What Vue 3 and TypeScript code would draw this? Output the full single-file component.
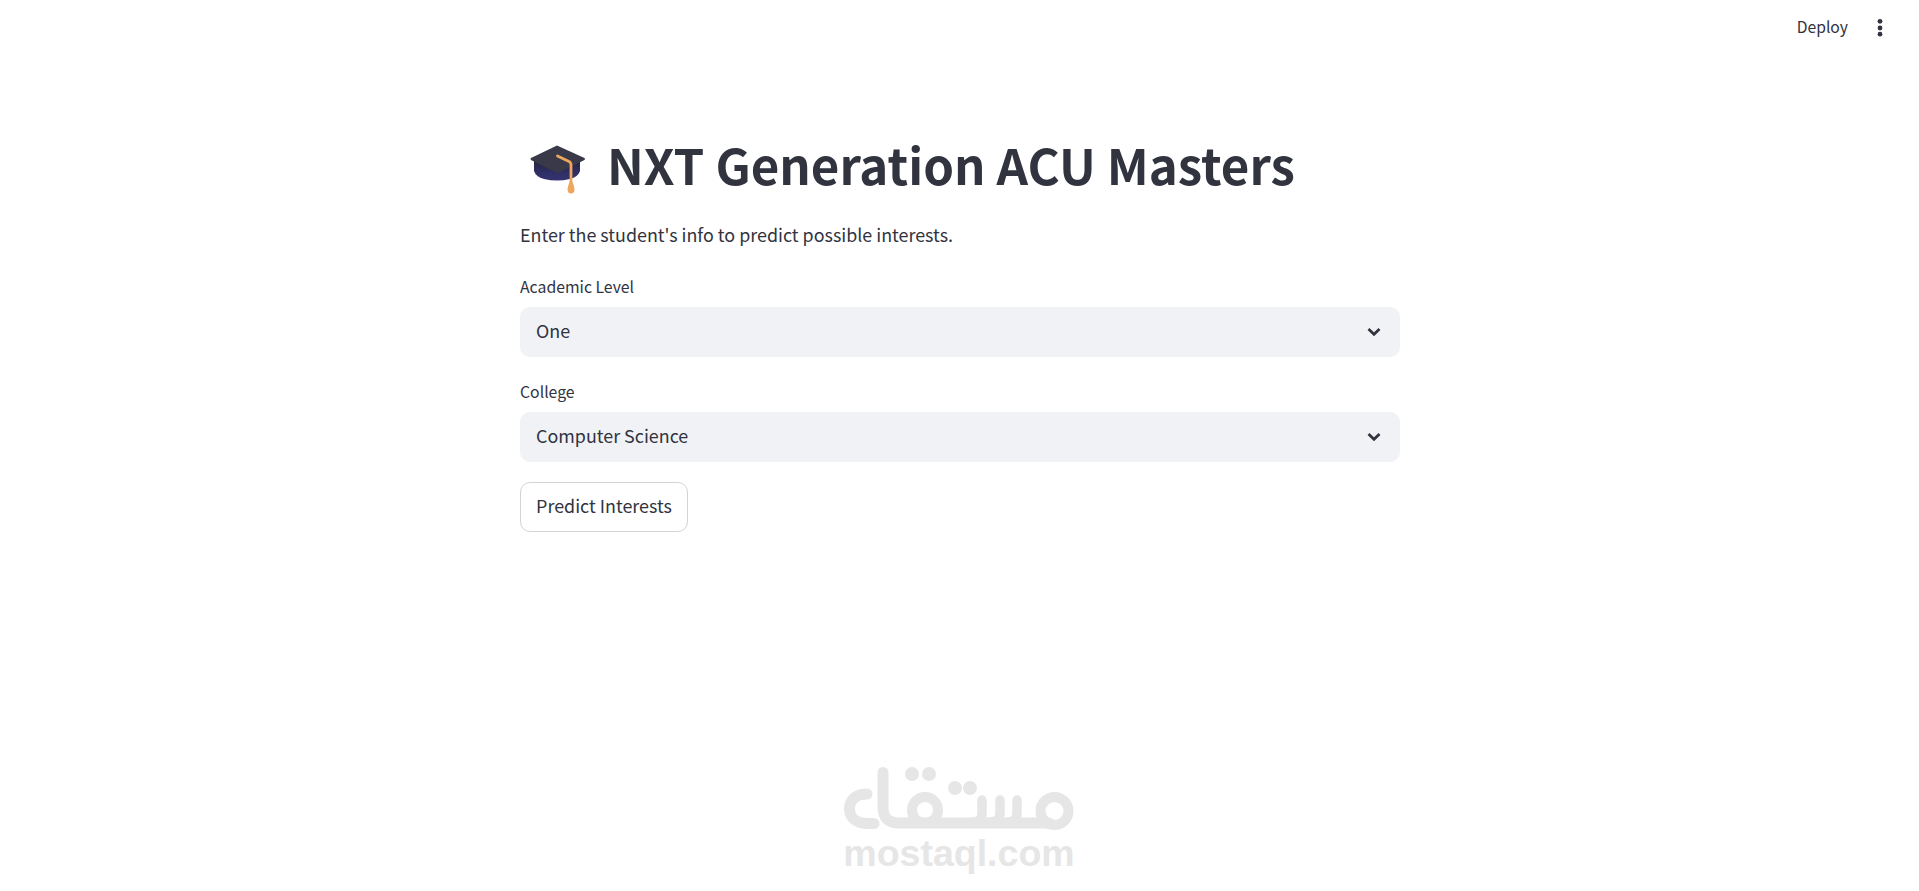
<script setup lang="ts">
const selects = [
  { label: 'Academic Level', value: 'One' },
  { label: 'College', value: 'Computer Science' },
]
</script>

<template>
  <div class="page">
    <header class="topbar">
      <span class="deploy">Deploy</span>
      <svg class="kebab" width="6" height="20" viewBox="0 0 6 20" aria-hidden="true">
        <circle cx="3" cy="3.3" r="2.4" />
        <circle cx="3" cy="10" r="2.4" />
        <circle cx="3" cy="16.2" r="2.4" />
      </svg>
    </header>
    <main class="content">
      <h1 class="title">
        <svg class="cap" width="56" height="50" viewBox="0 0 56 50" aria-hidden="true">
          <defs>
            <linearGradient id="band" x1="0" y1="0" x2="0" y2="1">
              <stop offset="0" stop-color="#25243a" />
              <stop offset="0.6" stop-color="#2f2e66" />
              <stop offset="1" stop-color="#34336e" />
            </linearGradient>
          </defs>
          <path d="M4 15 V26 Q6 32 14 34 Q27 37 40 34 Q48 32 50 26 V15z" fill="url(#band)" />
          <path d="M27 0.5 L54.5 13 Q55.5 14 54.5 15 L29 27.5 Q27.5 28.2 26 27.5 L1 15 Q0 14 1 13z" fill="#3a394a" />
          <path d="M27.5 11 L39 16.5 Q41 17.5 41 20 V38" fill="none" stroke="#eda75c" stroke-width="2.8" stroke-linecap="round" />
          <path d="M39.5 37 h3 q1.5 4 2 7 q0 4.5-3.5 4.5 q-3.500 0-3.500-4.500 q.5-3 2-7z" fill="#eda75c" />
        </svg>
        <span>NXT Generation ACU Masters</span>
      </h1>
      <p class="intro">Enter the student's info to predict possible interests.</p>
      <div v-for="s in selects" :key="s.label" class="field">
        <label class="label">{{ s.label }}</label>
        <div class="select">
          <span class="value">{{ s.value }}</span>
          <svg width="14" height="10" viewBox="0 0 14 10" aria-hidden="true">
            <path d="M1.500 2 L7 7.300 L12.500 2" fill="none" stroke="#31333f" stroke-width="2.700" />
          </svg>
        </div>
      </div>
      <button class="btn" type="button">Predict Interests</button>
    </main>
    <div class="mark">
      <svg width="230" height="70" viewBox="0 0 230 70" role="img" aria-label="مستقل">
        <g fill="none" stroke="#e6e6e6" stroke-width="11" stroke-linecap="round" stroke-linejoin="round">
          <path d="M23 27 C12 27 5.500 33 5.500 42 C5.500 51 13 56.500 24 56.500 H30" />
          <path d="M39 5.500 V40 Q39 56 55 56 H205" />
          <path stroke-width="9.500" d="M138 33 V46 Q138 55 128 55 M156 33 V46 Q156 55 146 55 M173 33 V46 Q173 55 163 55" />
          <circle cx="81" cy="43" r="13" stroke-width="10" />
          <circle cx="210.500" cy="44" r="14" stroke-width="10" />
        </g>
        <g fill="#e6e6e6">
          <circle cx="68" cy="7" r="7" /><circle cx="85" cy="7" r="7" />
          <circle cx="111" cy="21" r="7" /><circle cx="126" cy="21" r="7" />
        </g>
      </svg>
      <span class="mark-text">mostaql.com</span>
    </div>
  </div>
</template>

<style scoped>
.page {
  position: relative;
  height: 891px;
  overflow: hidden;
  background: #fff;
  color: #31333f;
  font-family: "Noto Sans CJK SC", "Noto Sans", sans-serif;
}
.topbar {
  display: flex;
  justify-content: flex-end;
  align-items: center;
  gap: 29px;
  height: 55px;
  padding-right: 36px;
}
.deploy { font-size: 15.700px; padding-bottom: 2px; }
.kebab { fill: #31333f; }
.content {
  display: flex;
  flex-direction: column;
  align-items: stretch;
  padding: 0 519px 0 520px;
}
.title {
  display: flex;
  align-items: center;
  gap: 21px;
  margin: 74px 0 0;
  padding-left: 10px;
  height: 70px;
  font-size: 49.200px;
  font-weight: 700;
  line-height: 70px;
}
.cap { margin-top: 11px; }
.intro {
  margin: 19px 0 0;
  font-size: 17.900px;
  line-height: 32px;
}
.field {
  display: flex;
  flex-direction: column;
  margin-top: 22px;
}
.intro + .field { margin-top: 24px; }
.label {
  font-size: 15.800px;
  line-height: 25px;
  margin-bottom: 8px;
}
.select {
  display: flex;
  justify-content: space-between;
  align-items: center;
  height: 50px;
  padding: 0 19px 0 16px;
  border-radius: 10px;
  background: #f0f2f6;
  font-size: 17.900px;
}
.value { padding-bottom: 4px; }
.btn {
  align-self: flex-start;
  height: 50px;
  width: 168px;
  margin-top: 20px;
  padding: 0 0 4px;
  border: 1px solid #d3d4d8;
  border-radius: 10px;
  background: #fff;
  color: #31333f;
  font: inherit;
  font-size: 17.900px;
}
.mark {
  position: absolute;
  left: 844px;
  top: 767px;
  display: flex;
  flex-direction: column;
  align-items: center;
  width: 230px;
}
.mark-text {
  font-family: "Liberation Sans", Arial, sans-serif;
  font-weight: 700;
  font-size: 37.500px;
  line-height: 38px;
  margin-top: -3px;
  color: #e6e6e6;
}
</style>
